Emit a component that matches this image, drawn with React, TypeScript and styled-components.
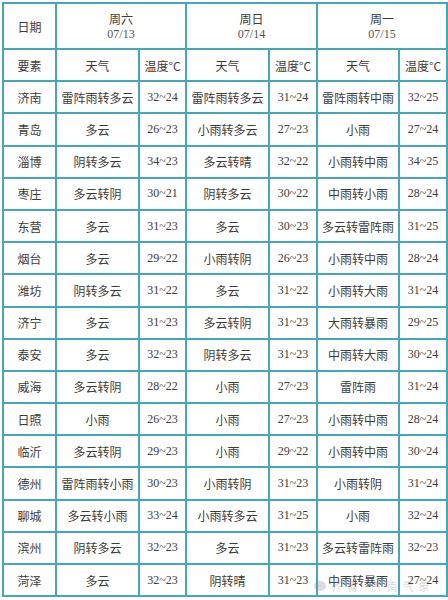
import React from 'react';
import styled, {createGlobalStyle} from "styled-components";

const GlobalStyle = createGlobalStyle`
  body {
    margin: 0;
    background: #ffffff;
    font-family: "Noto Sans CJK SC", "Noto Sans", sans-serif;
  }
`

const days = [
    {name: '周六', date: '07/13'},
    {name: '周日', date: '07/14'},
    {name: '周一', date: '07/15'},
]

const rows: string[][] = [
    ['济南', '雷阵雨转多云', '32~24', '雷阵雨转多云', '31~24', '雷阵雨转中雨', '32~25'],
    ['青岛', '多云', '26~23', '小雨转多云', '27~23', '小雨', '27~24'],
    ['淄博', '阴转多云', '34~23', '多云转晴', '32~22', '小雨转中雨', '34~25'],
    ['枣庄', '多云转阴', '30~21', '阴转多云', '30~22', '中雨转小雨', '28~24'],
    ['东营', '多云', '31~23', '多云', '30~23', '多云转雷阵雨', '31~25'],
    ['烟台', '多云', '29~22', '小雨转阴', '26~23', '小雨转中雨', '28~24'],
    ['潍坊', '阴转多云', '31~22', '多云', '31~22', '小雨转大雨', '31~24'],
    ['济宁', '多云', '31~23', '多云转阴', '31~23', '大雨转暴雨', '29~25'],
    ['泰安', '多云', '32~23', '阴转多云', '31~23', '中雨转大雨', '30~24'],
    ['威海', '多云转阴', '28~22', '小雨', '27~23', '雷阵雨', '31~24'],
    ['日照', '小雨', '26~23', '小雨', '27~23', '小雨转中雨', '28~24'],
    ['临沂', '多云转阴', '29~23', '小雨', '29~22', '小雨转中雨', '30~24'],
    ['德州', '雷阵雨转小雨', '30~23', '小雨转阴', '31~23', '小雨转阴', '31~24'],
    ['聊城', '多云转小雨', '33~24', '小雨转多云', '31~25', '小雨', '32~24'],
    ['滨州', '阴转多云', '32~23', '多云', '31~23', '多云转雷阵雨', '32~23'],
    ['菏泽', '多云', '32~23', '阴转晴', '31~23', '中雨转暴雨', '27~24'],
]

const widths = [53, 83, 47, 83, 48, 82, 48]

const App = () => {
    return (
        <Page>
            <GlobalStyle/>
            <Table>
                <colgroup>
                    {widths.map((w, i) => <col key={i} style={{width: w}}/>)}
                </colgroup>
                <tbody>
                <HeadRow>
                    <Cell>日期</Cell>
                    {days.map(d => (
                        <Cell key={d.date} colSpan={2}>
                            <DayName>{d.name}</DayName>
                            <DayDate>{d.date}</DayDate>
                        </Cell>
                    ))}
                </HeadRow>
                <Row>
                    <Cell>要素</Cell>
                    {days.map(d => (
                        <React.Fragment key={d.date}>
                            <Cell>天气</Cell>
                            <Cell>温度°C</Cell>
                        </React.Fragment>
                    ))}
                </Row>
                {rows.map(r => (
                    <Row key={r[0]}>
                        {r.map((v, i) => (
                            <Cell key={i} $num={i > 0 && i % 2 === 0}>{v}</Cell>
                        ))}
                    </Row>
                ))}
                </tbody>
            </Table>
            <Watermark>
                <WmIcon/>
                <span>齐鲁 济南气象</span>
            </Watermark>
        </Page>
    );
};

const Page = styled.div`
  position: relative;
  padding: 2px 0 0 2px;
  width: 448px;
  height: 600px;
  box-sizing: border-box;
`
const Table = styled.table`
  width: 444px;
  border-collapse: collapse;
  table-layout: fixed;
  border: 2px solid #45a8ba;
`
const HeadRow = styled.tr`
  height: 46px;
`
const Row = styled.tr`
  height: 32.2px;
`
const Cell = styled.td<{ $num?: boolean }>`
  border: 2px solid #45a8ba;
  padding: 0;
  text-align: center;
  vertical-align: middle;
  color: #3c3c3c;
  font-size: 12px;
  line-height: 15px;
  white-space: nowrap;
  font-family: ${p => p.$num
          ? '"Liberation Serif", serif'
          : '"Noto Sans CJK SC", "Noto Sans", sans-serif'};
`
const DayName = styled.div`
  font-size: 12px;
  line-height: 16px;
`
const DayDate = styled.div`
  font-family: "Liberation Serif", serif;
  font-size: 12px;
  line-height: 15px;
  color: #555;
`
const Watermark = styled.div`
  position: absolute;
  left: 314px;
  top: 578px;
  display: flex;
  align-items: center;
  gap: 5px;
  font-size: 11px;
  color: rgba(120, 120, 120, 0.3);
  letter-spacing: 5px;
  pointer-events: none;
`
const WmIcon = styled.div`
  width: 12px;
  height: 10px;
  border-radius: 50%;
  background: rgba(140, 140, 140, 0.3);
`

export default App;
